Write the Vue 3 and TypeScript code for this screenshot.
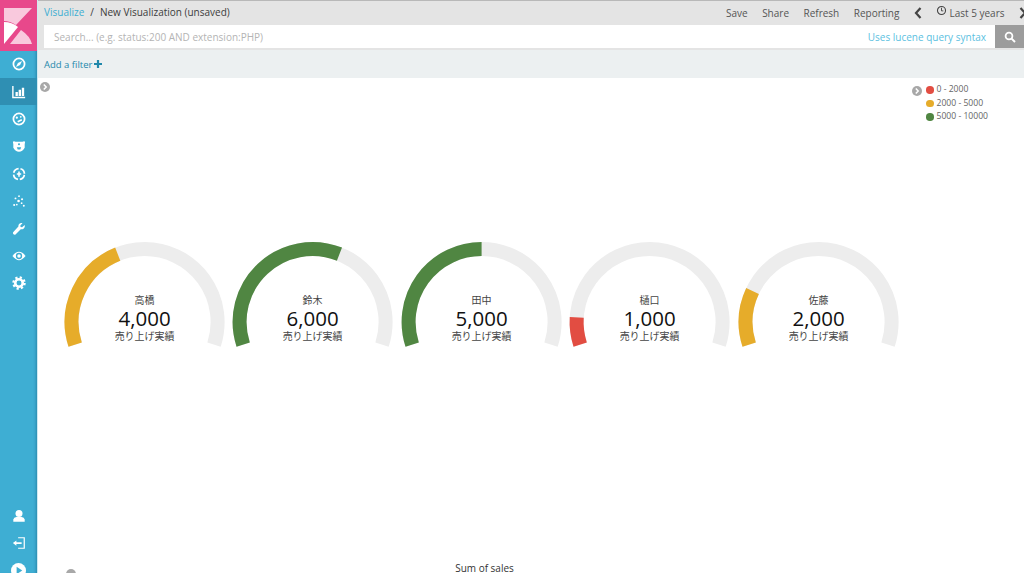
<script setup lang="ts">
interface Gauge { name: string; value: number; color: string }
const gauges: Gauge[] = [
  { name: '高橋', value: 4000, color: '#e6ac2a' },
  { name: '鈴木', value: 6000, color: '#508642' },
  { name: '田中', value: 5000, color: '#508642' },
  { name: '樋口', value: 1000, color: '#e24d42' },
  { name: '佐藤', value: 2000, color: '#e6ac2a' },
]
const legend = [
  { label: '0 - 2000', color: '#e24d42' },
  { label: '2000 - 5000', color: '#e6ac2a' },
  { label: '5000 - 10000', color: '#508642' },
]
const R = 73
const C = 84.6
const CY = 82
const pt = (deg: number) => {
  const a = (deg * Math.PI) / 180
  return `${(C + R * Math.sin(a)).toFixed(2)} ${(CY - R * Math.cos(a)).toFixed(2)}`
}
const arc = (from: number, to: number) =>
  `M${pt(from)} A${R} ${R} 0 ${to - from > 180 ? 1 : 0} 1 ${pt(to)}`
const valueArc = (v: number) => arc(-108, -108 + (216 * v) / 10000)
const track = arc(-108, 108)
</script>

<template>
  <div class="page">
    <nav class="side">
      <div class="logo">
        <svg width="37" height="51" viewBox="0 0 37 51">
          <path d="M4 8H32L16 25Q10 21 4 21Z" fill="#f9c9dd" />
          <path d="M4 22Q12 22 18 27L4 44Z" fill="#fff" />
          <path d="M10 44L21 30Q30 36 32 44Z" fill="#f9c9dd" />
        </svg>
      </div>
      <div class="item">
        <svg class="ic" viewBox="0 0 16 16"><circle cx="8" cy="8" r="6.4" fill="none" stroke="#fff" stroke-width="2" /><path d="M11.5 4.5L9.2 9.2L4.5 11.5L6.8 6.8Z" fill="#fff" /></svg>
      </div>
      <div class="item active">
        <svg class="ic" viewBox="0 0 16 16"><path d="M1 1V14.2H15" fill="none" stroke="#fff" stroke-width="1.6" /><path d="M4 8H6.7V12.5H4ZM7.6 5.5H10.3V12.5H7.6ZM11.2 3H13.9V12.5H11.2Z" fill="#fff" /></svg>
      </div>
      <div class="item">
        <svg class="ic" viewBox="0 0 16 16"><circle cx="8" cy="8" r="6.4" fill="none" stroke="#fff" stroke-width="2" /><circle cx="5.5" cy="6.5" r="1.3" fill="#fff" /><circle cx="10" cy="5.5" r="1" fill="#fff" /><path d="M6.5 11.2L11.2 8.8" stroke="#fff" stroke-width="1.8" /></svg>
      </div>
      <div class="item">
        <svg class="ic" viewBox="0 0 16 16"><path d="M1 3Q2 2 4 3H12Q14 2 15 3L14.5 6V10Q12 14.5 8 14.5Q4 14.5 1.5 10V6Z" fill="#fff" /><path d="M5.5 9.5H10.5L9.5 12H6.5Z" fill="#3eaed3" /><circle cx="8" cy="6" r="1.2" fill="#3eaed3" /></svg>
      </div>
      <div class="item">
        <svg class="ic" viewBox="0 0 16 16"><circle cx="8" cy="8" r="6.2" fill="none" stroke="#fff" stroke-width="2" stroke-dasharray="7.5 2.24" stroke-dashoffset="-1" /><path d="M8 5V11M5.5 8H10.5" stroke="#fff" stroke-width="1.8" /></svg>
      </div>
      <div class="item">
        <svg class="ic" viewBox="0 0 16 16"><g fill="#fff"><circle cx="8" cy="2.5" r="1" /><circle cx="4" cy="5" r="1.1" /><circle cx="11.5" cy="6" r="1.2" /><circle cx="7.5" cy="8" r="1.5" /><circle cx="2.5" cy="12.5" r="1.2" /><circle cx="11" cy="10.5" r="1" /><circle cx="13.5" cy="13.5" r="1.1" /><circle cx="5.5" cy="12" r="1" /></g></svg>
      </div>
      <div class="item">
        <svg class="ic" viewBox="0 0 16 16"><path d="M14.5 3.5L11.5 6L9.8 5.6L9.5 4L12 1.5C9.5 0.6 7 2.5 7.3 5.2L1.3 11.6C0.2 13 2.7 15.4 4 14.2L10 8.2C13 9 15.3 6.5 14.5 3.5Z" fill="#fff" /></svg>
      </div>
      <div class="item">
        <svg class="ic" viewBox="0 0 16 16"><path d="M0.5 8Q8 -1.5 15.5 8Q8 17.5 0.5 8Z" fill="#fff" /><circle cx="8" cy="8" r="3.6" fill="#3eaed3" /><circle cx="8" cy="8" r="2" fill="#fff" /></svg>
      </div>
      <div class="item">
        <svg class="ic" viewBox="0 0 16 16"><circle cx="8" cy="8" r="4.3" fill="none" stroke="#fff" stroke-width="3" /><circle cx="8" cy="8" r="6.4" fill="none" stroke="#fff" stroke-width="2.6" stroke-dasharray="2.5 2.53" /></svg>
      </div>
      <div class="spacer"></div>
      <div class="item">
        <svg class="ic" viewBox="0 0 16 16"><circle cx="8" cy="5" r="4" fill="#fff" /><path d="M1.5 14.5V12Q2 9.6 5 9.2H11Q14 9.6 14.5 12V14.5Z" fill="#fff" /></svg>
      </div>
      <div class="item">
        <svg class="ic" viewBox="0 0 16 16"><path d="M7 2H14V14H7" fill="none" stroke="#fff" stroke-width="1.4" /><path d="M1 8L5 5V7H11V9H5V11Z" fill="#fff" /></svg>
      </div>
      <div class="item">
        <svg class="ic big" viewBox="0 0 16 16"><circle cx="8" cy="8" r="8" fill="#fff" /><path d="M6 4L12 8L6 12Z" fill="#3eaed3" /></svg>
      </div>
    </nav>

    <div class="content">
      <header class="topbar">
        <div class="crumbs">
          <span class="link">Visualize</span>
          <span class="slash">/</span>
          <span>New Visualization (unsaved)</span>
        </div>
        <div class="actions">
          <span>Save</span>
          <span>Share</span>
          <span>Refresh</span>
          <span>Reporting</span>
          <svg class="chev" viewBox="0 0 8 12"><path d="M6.5 1L2 6L6.5 11" fill="none" stroke="#444" stroke-width="2.2" /></svg>
          <span class="time">
            <svg class="clock" viewBox="0 0 12 12"><circle cx="6" cy="6" r="4.4" fill="none" stroke="#444" stroke-width="1.2" /><path d="M6 3V6.4H8" fill="none" stroke="#444" stroke-width="1" /></svg>
            Last 5 years
          </span>
          <svg class="chev" viewBox="0 0 8 12"><path d="M1.5 1L6 6L1.5 11" fill="none" stroke="#444" stroke-width="2.2" /></svg>
        </div>
      </header>

      <div class="searchrow">
        <div class="search">
          <span class="placeholder">Search... (e.g. status:200 AND extension:PHP)</span>
          <span class="syntax">Uses lucene query syntax</span>
        </div>
        <button class="go" type="button">
          <svg width="12" height="12" viewBox="0 0 12 12"><circle cx="5" cy="5" r="3.4" fill="none" stroke="#fff" stroke-width="1.8" /><path d="M7.6 7.6L11 11" stroke="#fff" stroke-width="2" /></svg>
        </button>
      </div>

      <div class="filterrow">
        <span>Add a filter</span>
        <svg width="8" height="8" viewBox="0 0 8 8"><path d="M4 0V8M0 4H8" stroke="#1f88ab" stroke-width="2.2" /></svg>
      </div>

      <main class="chart">
        <svg class="toggle left" viewBox="0 0 10 10"><circle cx="5" cy="5" r="5" fill="#a8a8a8" /><path d="M3.8 2.5L6.2 5L3.8 7.5" fill="none" stroke="#fff" stroke-width="1.5" /></svg>
        <div class="legend">
          <svg class="toggle" viewBox="0 0 10 10"><circle cx="5" cy="5" r="5" fill="#a8a8a8" /><path d="M3.8 2.5L6.2 5L3.8 7.5" fill="none" stroke="#fff" stroke-width="1.5" /></svg>
          <ul>
            <li v-for="l in legend" :key="l.label">
              <i :style="{ background: l.color }"></i>{{ l.label }}
            </li>
          </ul>
        </div>

        <div class="gauges">
          <svg v-for="g in gauges" :key="g.name" class="gauge" width="168.6" height="120" viewBox="0 0 168.6 120">
            <path :d="track" fill="none" stroke="#ededed" stroke-width="14" />
            <path :d="valueArc(g.value)" fill="none" :stroke="g.color" stroke-width="14" />
            <text :x="C" y="64.5" class="t-name">{{ g.name }}</text>
            <text :x="C" y="86.5" class="t-val">{{ g.value.toLocaleString('en-US') }}</text>
            <text :x="C" y="100" class="t-sub">売り上げ実績</text>
          </svg>
        </div>
        <div class="axis">
          <span class="dot"></span>
          <span class="title">Sum of sales</span>
        </div>
      </main>
    </div>
  </div>
</template>

<style>
html, body { margin: 0; height: 100%; overflow: hidden; background: #fff; }
</style>

<style scoped>
.page {
  display: flex;
  width: 1024px;
  height: 573px;
  overflow: hidden;
  font-family: "Open Sans", "Noto Sans CJK JP", sans-serif;
  color: #444;
}
.side {
  flex: 0 0 37px;
  width: 37px;
  height: 573px;
  display: flex;
  flex-direction: column;
  background: #3eaed3;
  box-shadow: inset -3px 0 3px -2px rgba(0, 60, 90, .35), 1px 0 0 #cfe9f2;
  overflow: hidden;
  z-index: 1;
}
.logo { flex: 0 0 50.5px; height: 50.5px; background: #e8488b; }
.logo svg { display: block; }
.item {
  flex: 0 0 27.4px;
  height: 27.4px;
  display: flex;
  align-items: center;
  justify-content: center;
}
.item.active { background: #2f8fb3; }
.ic { width: 14px; height: 14px; }
.ic.big { width: 15px; height: 15px; }
.spacer { flex: 0 0 205px; }
.content { flex: 1 1 auto; min-width: 0; display: flex; flex-direction: column; }
.topbar {
  height: 25px;
  flex: 0 0 25px;
  box-sizing: border-box;
  border-top: 1px solid #b8b8b8;
  background: #e4e4e4;
  display: flex;
  align-items: center;
  justify-content: space-between;
  padding: 0 0 1px 7px;
  font-size: 10px;
}
.crumbs { display: flex; gap: 5px; color: #3c3c3c; margin-bottom: 1px; }
.link { color: #3caed2; }
.slash { margin: 0 1px; }
.actions { display: flex; align-items: center; gap: 14.5px; color: #555; }
.chev { width: 8px; height: 12px; }
.time { display: inline-flex; align-items: center; gap: 2px; }
.clock { width: 11px; height: 11px; margin-top: -4px; }
.actions > .chev:last-child { margin-left: 0; margin-right: -3px; }
.searchrow {
  flex: 0 0 25px;
  height: 25px;
  display: flex;
  background: #e4e4e4;
  padding: 0 0 2px 7px;
  box-sizing: border-box;
}
.search {
  flex: 1 1 auto;
  background: #fff;
  display: flex;
  align-items: center;
  justify-content: space-between;
  padding: 1px 9px 0 10px;
  font-size: 10px;
}
.placeholder { color: #b4b4b4; }
.syntax { color: #5cbfdf; }
.go {
  flex: 0 0 29px;
  width: 29px;
  border: 0;
  padding: 0;
  background: #9c9c9c;
  display: flex;
  align-items: center;
  justify-content: center;
}
.filterrow {
  flex: 0 0 28px;
  height: 28px;
  box-sizing: border-box;
  display: flex;
  align-items: center;
  gap: 2px;
  padding: 0 0 0 7px;
  background: #ecf0f1;
  color: #1f88ab;
  font-size: 9.5px;
}
.chart { position: relative; flex: 1 1 auto; background: #fff; }
.toggle { width: 10px; height: 10px; display: block; }
.toggle.left { position: absolute; left: 3px; top: 4px; }
.legend { position: absolute; top: 5px; left: 875px; display: flex; gap: 4px; }
.legend .toggle { margin-top: 3px; }
.legend ul { list-style: none; margin: 0; padding: 0; font-size: 8.6px; color: #666; }
.legend li { height: 13.7px; line-height: 13.7px; display: flex; align-items: center; white-space: nowrap; gap: 3px; }
.legend i { flex: 0 0 7.5px; width: 7.5px; height: 7.5px; border-radius: 50%; display: block; }
.gauges { display: flex; padding: 162px 0 0 22.7px; }
.gauge { flex: 0 0 168.6px; display: block; }
.t-name { font-size: 10px; fill: #444; text-anchor: middle; }
.t-val { font-size: 20.5px; fill: #111; text-anchor: middle; }
.t-sub { font-size: 10px; fill: #444; text-anchor: middle; }
.axis { position: relative; margin-top: 201px; height: 20px; text-align: center; font-size: 10px; padding-right: 92px; color: #333; }
.dot { position: absolute; left: 29px; top: 8px; width: 10px; height: 10px; border-radius: 50%; background: #a8a8a8; }
</style>
